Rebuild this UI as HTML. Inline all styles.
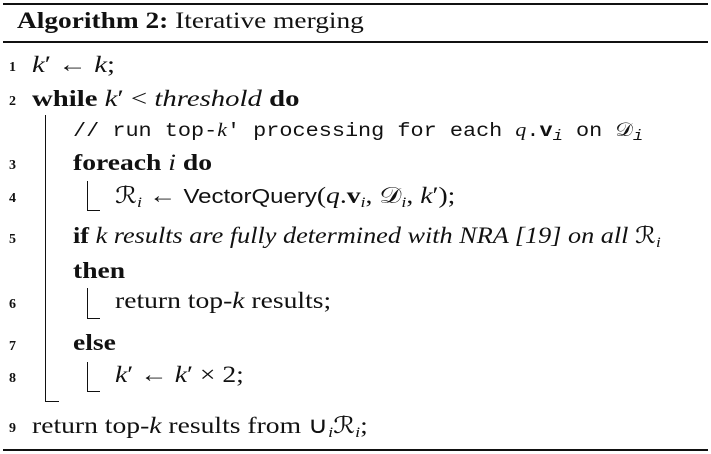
<!DOCTYPE html>
<html><head><meta charset="utf-8"><style>
html,body{margin:0;padding:0;background:#fff;}
body{width:711px;height:454px;position:relative;overflow:hidden;font-family:"Liberation Serif",serif;color:#111;}
.t{position:absolute;font-size:23px;line-height:22px;white-space:nowrap;transform-origin:0 50%;}
.n{position:absolute;left:9px;font-size:14px;font-weight:bold;line-height:14px;}
.r{position:absolute;background:#111;}
i{font-style:italic}
.s{font-family:"Liberation Sans",sans-serif;font-size:20px}
.m{font-family:"Liberation Mono",monospace;font-size:19px}
sub{font-size:15px;vertical-align:-4px;line-height:0;font-style:italic}
</style></head><body>
<div class="r" style="left:3px;top:3px;width:705px;height:1.5px"></div>
<div class="t" style="left:17px;top:10px;transform:scaleX(1.19)"><b>Algorithm 2:</b> Iterative merging</div>
<div class="r" style="left:3px;top:41px;width:705px;height:1.5px"></div>

<div class="n" style="top:61px">1</div>
<div class="t" style="left:32px;top:54px;transform:scaleX(1.25)"><i>k</i>′ ← <i>k</i>;</div>
<div class="n" style="top:95px">2</div>
<div class="t" style="left:32px;top:88px;transform:scaleX(1.25)"><b>while</b> <i>k</i>′ &lt; <i>threshold</i> <b>do</b></div>
<div class="t m" style="left:73px;top:120px;transform:scaleX(1.15)">// run top-<i style="font-family:'Liberation Serif'">k</i>′ processing for each <i style="font-family:'Liberation Serif'">q</i>.<b>v</b><sub>i</sub> on 𝒟<sub>i</sub></div>
<div class="n" style="top:159px">3</div>
<div class="t" style="left:73px;top:152px;transform:scaleX(1.2)"><b>foreach</b> <i>i</i> <b>do</b></div>
<div class="n" style="top:192px">4</div>
<div class="t" style="left:115px;top:185px;transform:scaleX(1.2)">ℛ<sub>i</sub> ← <span class="s">VectorQuery</span>(<i>q</i>.<b>v</b><sub>i</sub>, 𝒟<sub>i</sub>, <i>k</i>′);</div>
<div class="n" style="top:233px">5</div>
<div class="t" style="left:73px;top:225px;transform:scaleX(1.14)"><b>if</b> <i>k results are fully determined with NRA [19] on all</i> ℛ<sub>i</sub></div>
<div class="t" style="left:73px;top:260px;transform:scaleX(1.2)"><b>then</b></div>
<div class="n" style="top:298px">6</div>
<div class="t" style="left:115px;top:290px;transform:scaleX(1.2)">return top-<i>k</i> results;</div>
<div class="n" style="top:340px">7</div>
<div class="t" style="left:73px;top:332px;transform:scaleX(1.2)"><b>else</b></div>
<div class="n" style="top:372px">8</div>
<div class="t" style="left:115px;top:364px;transform:scaleX(1.2)"><i>k</i>′ ← <i>k</i>′ × 2;</div>
<div class="n" style="top:422px">9</div>
<div class="t" style="left:32px;top:415px;transform:scaleX(1.2)">return top-<i>k</i> results from ∪<sub>i</sub>ℛ<sub>i</sub>;</div>

<div class="r" style="left:45px;top:115px;width:1px;height:287px"></div>
<div class="r" style="left:45px;top:401px;width:14px;height:1px"></div>
<div class="r" style="left:87px;top:181px;width:1px;height:30px"></div>
<div class="r" style="left:87px;top:210px;width:13px;height:1px"></div>
<div class="r" style="left:87px;top:288px;width:1px;height:31px"></div>
<div class="r" style="left:87px;top:318px;width:13px;height:1px"></div>
<div class="r" style="left:87px;top:362px;width:1px;height:30px"></div>
<div class="r" style="left:87px;top:391px;width:13px;height:1px"></div>

<div class="r" style="left:3px;top:449px;width:705px;height:2px"></div>
</body></html>
